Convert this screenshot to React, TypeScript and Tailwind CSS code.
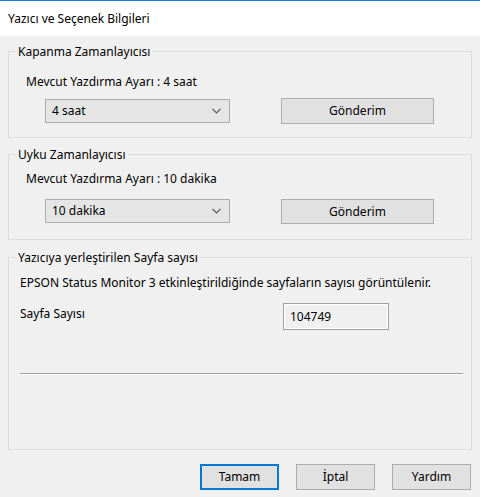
const font = { fontFamily: '"Segoe UI", "Noto Sans", "Liberation Sans", sans-serif' };

function Group({ title, className, children }: { title: string; className: string; children?: React.ReactNode }) {
  return (
    <div className={`mx-2 border border-[#dcdcdc] ${className}`}>
      <div className="-mt-[8px] ml-[7px] w-fit bg-[#f0f0f0] px-[2px] leading-4">{title}</div>
      {children}
    </div>
  );
}

function Combo({ value }: { value: string }) {
  return (
    <div className="flex h-[24px] w-[185px] items-center justify-between border border-[#adadad] bg-[#e5e5e5] pl-[6px] pr-[8px]">
      <span>{value}</span>
      <svg width="9" height="6" viewBox="0 0 9 6" fill="none">
        <path d="M0.5 0.8 L4.5 4.8 L8.5 0.8" stroke="#555555" strokeWidth="1.2" />
      </svg>
    </div>
  );
}

function Btn({ label, className }: { label: string; className: string }) {
  return (
    <button className={`flex items-center justify-center bg-[#e1e1e1] ${className}`}>{label}</button>
  );
}

export default function App() {
  return (
    <div className="h-[497px] w-[480px] overflow-hidden bg-[#f0f0f0] text-[12px] text-black" style={font}>
      <div className="flex h-[36px] items-center border-t border-[#1a7fd4] bg-white pl-2">
        Yazıcı ve Seçenek Bilgileri
      </div>

      <Group title="Kapanma Zamanlayıcısı" className="mt-[15px] h-[87px]">
        <div className="ml-[17px] mt-[14px] leading-4">Mevcut Yazdırma Ayarı : 4 saat</div>
        <div className="mt-[8px] flex items-start">
          <div className="ml-[36px] mt-[1px]">
            <Combo value="4 saat" />
          </div>
          <Btn label="Gönderim" className="ml-[51px] h-[26px] w-[153px] border border-[#adadad]" />
        </div>
      </Group>

      <Group title="Uyku Zamanlayıcısı" className="mt-[16px] h-[86px]">
        <div className="ml-[17px] mt-[8px] leading-4">Mevcut Yazdırma Ayarı : 10 dakika</div>
        <div className="mt-[12px] flex items-start">
          <div className="ml-[36px]">
            <Combo value="10 dakika" />
          </div>
          <Btn label="Gönderim" className="ml-[51px] h-[25px] w-[153px] border border-[#adadad]" />
        </div>
      </Group>

      <Group title="Yazıcıya yerleştirilen Sayfa sayısı" className="mt-[17px] h-[193px]">
        <div className="ml-[11px] mt-[9px] leading-4">
          EPSON Status Monitor 3 etkinleştirildiğinde sayfaların sayısı görüntülenir.
        </div>
        <div className="mt-[12px] flex items-start">
          <div className="ml-[11px] mt-[3px] w-[263px] leading-4">Sayfa Sayısı</div>
          <div className="flex h-[27px] w-[106px] items-center border border-[#a0a0a0] pl-[6px] shadow-[inset_1px_1px_0_#ffffff,inset_-1px_-1px_0_#ffffff]">
            104749
          </div>
        </div>
        <div className="ml-[11px] mt-[43px] h-[2px] w-[443px] border-t border-b border-t-[#a0a0a0] border-b-white" />
      </Group>

      <div className="mt-[14px] flex justify-end gap-[17px] pr-[9px]">
        <Btn label="Tamam" className="h-[26px] w-[79px] border-2 border-[#0078d7]" />
        <Btn label="İptal" className="h-[26px] w-[79px] border border-[#adadad]" />
        <Btn label="Yardım" className="h-[26px] w-[79px] border border-[#adadad]" />
      </div>
    </div>
  );
}
